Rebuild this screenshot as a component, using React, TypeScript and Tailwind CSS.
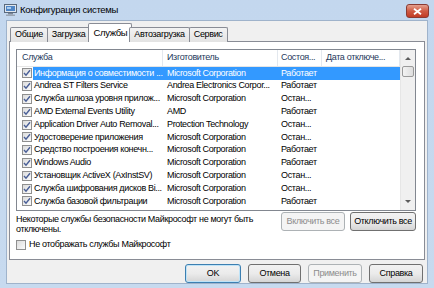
import React from 'react';

const rows = [
  { name: 'Информация о совместимости ...', maker: 'Microsoft Corporation', state: 'Работает' },
  { name: 'Andrea ST Filters Service', maker: 'Andrea Electronics Corpor...', state: 'Работает' },
  { name: 'Служба шлюза уровня прилож...', maker: 'Microsoft Corporation', state: 'Остан...' },
  { name: 'AMD External Events Utility', maker: 'AMD', state: 'Работает' },
  { name: 'Application Driver Auto Removal...', maker: 'Protection Technology', state: 'Остан...' },
  { name: 'Удостоверение приложения', maker: 'Microsoft Corporation', state: 'Остан...' },
  { name: 'Средство построения конечн...', maker: 'Microsoft Corporation', state: 'Работает' },
  { name: 'Windows Audio', maker: 'Microsoft Corporation', state: 'Работает' },
  { name: 'Установщик ActiveX (AxInstSV)', maker: 'Microsoft Corporation', state: 'Остан...' },
  { name: 'Служба шифрования дисков Bi...', maker: 'Microsoft Corporation', state: 'Остан...' },
  { name: 'Служба базовой фильтрации', maker: 'Microsoft Corporation', state: 'Работает' },
];

const tabs = ['Общие', 'Загрузка', 'Службы', 'Автозагрузка', 'Сервис'];

const CheckBox = ({ checked }: { checked: boolean }) => (
  <div className="w-[10px] h-[10px] border border-[#8f8f8f] bg-gradient-to-br from-[#dcdcdc] to-[#fbfbfb] flex items-center justify-center shrink-0">
    {checked && (
      <svg width="8" height="8" viewBox="0 0 8 8">
        <path d="M1 4 L3 6.2 L7 1.2" fill="none" stroke="#4a5f97" strokeWidth="1.4" />
      </svg>
    )}
  </div>
);

const WinButton = ({ label, disabled, primary, w }: { label: string; disabled?: boolean; primary?: boolean; w: string }) => (
  <div
    className={`${w} h-[19px] rounded-[3px] border flex items-center justify-center ${
      disabled
        ? 'border-[#adb2b5] bg-[#f4f4f4] text-[#8d8d8d]'
        : primary
        ? 'border-[#3c7fb1] bg-gradient-to-b from-[#f2f2f2] via-[#ebebeb] to-[#d5d5d5] text-black shadow-[inset_0_0_0_1px_#bfe3f7]'
        : 'border-[#707070] bg-gradient-to-b from-[#f2f2f2] via-[#ebebeb] to-[#d5d5d5] text-black'
    }`}
  >
    {label}
  </div>
);

export default function App() {
  return (
    <div
      className="w-[434px] h-[288px] bg-gradient-to-b from-[#c3d7ee] to-[#c7daef] flex flex-col overflow-hidden"
      style={{ fontFamily: '"Liberation Sans", Arial, sans-serif' }}
    >
      {/* title bar */}
      <div className="h-[20px] flex items-center pl-[4px] pr-[5px] shrink-0">
        <svg width="13" height="12" viewBox="0 0 13 12" className="mr-[3px]">
          <rect x="0.5" y="0.5" width="12" height="8" fill="#dfe6ee" stroke="#5a6a7e" />
          <rect x="2" y="2" width="9" height="5" fill="#4f86c6" />
          <rect x="3" y="3" width="4" height="2" fill="#a9cdf2" />
          <rect x="4" y="9" width="5" height="1.5" fill="#7c8796" />
          <rect x="2" y="10.5" width="9" height="1.5" fill="#9aa5b3" />
        </svg>
        <span className="text-[9.5px] tracking-[-0.3px] text-black">Конфигурация системы</span>
        <div className="ml-auto mt-[2px] w-[23px] h-[14px] rounded-[3px] border border-[#8a3b33] bg-gradient-to-b from-[#e3a08f] via-[#cf5a43] to-[#c13b24] flex items-center justify-center">
          <svg width="9" height="7" viewBox="0 0 9 7">
            <path d="M1 0.8 L8 6.2 M8 0.8 L1 6.2" stroke="white" strokeWidth="1.8" />
          </svg>
        </div>
      </div>

      {/* client area */}
      <div className="flex-1 mx-[6px] mb-[4px] bg-[#f0f0f0] border border-[#9fb3cb] flex flex-col text-[9px] tracking-[-0.35px] text-black">
        {/* tabs */}
        <div className="flex items-end pl-[3px] h-[19px] mt-[2px] relative z-10">
          {tabs.map((t, i) =>
            t === 'Службы' ? (
              <div key={t} className="h-[19px] px-[4px] -mx-[2px] bg-white border border-b-0 border-[#898c95] rounded-t-[2px] flex items-center text-[9.5px]">
                {t}
              </div>
            ) : (
              <div
                key={t}
                className={`h-[15px] px-[4px] bg-gradient-to-b from-[#f3f3f3] to-[#e3e3e3] border border-b-0 border-[#898c95] rounded-t-[2px] flex items-center ${i > 0 ? '-ml-px' : ''}`}
              >
                {t}
              </div>
            )
          )}
        </div>

        {/* panel */}
        <div className="ml-[2px] w-[416px] h-[219px] -mt-px bg-white border border-[#898c95] flex flex-col pl-[6px] pt-[7px]">
          {/* list view */}
          <div className="w-[400px] h-[162px] border border-[#828790] flex">
            <div className="flex-1 flex flex-col overflow-hidden">
              <div className="h-[17px] flex items-center text-[#1e395b] border-b border-[#e5e5e5] shrink-0">
                <div className="w-[146px] pl-[5px] h-full flex items-center border-r border-[#e3e8ee]">Служба</div>
                <div className="w-[115px] pl-[4px] h-full flex items-center border-r border-[#e3e8ee]">Изготовитель</div>
                <div className="w-[44px] pl-[3px] h-full flex items-center border-r border-[#e3e8ee]">Состоя...</div>
                <div className="w-[78px] pl-[4px] h-full flex items-center border-r border-[#e3e8ee]">Дата отключе...</div>
              </div>
              {rows.map((r, i) => (
                <div key={i} className="h-[12.8px] flex items-center shrink-0 whitespace-nowrap">
                  <div className="w-[16px] pl-[5px] flex items-center">
                    <CheckBox checked />
                  </div>
                  <div className={`flex-1 h-full flex items-center ${i === 0 ? 'bg-[#3399ff] text-white' : ''}`}>
                    <div className="w-[130px] pl-[1px] overflow-hidden">{r.name}</div>
                    <div className="w-[115px] pl-[4px] overflow-hidden">{r.maker}</div>
                    <div className="w-[44px] pl-[3px] overflow-hidden">{r.state}</div>
                  </div>
                </div>
              ))}
            </div>
            {/* scrollbar */}
            <div className="w-[15px] bg-[#f0f0f0] border-l border-[#e6e6e6] flex flex-col">
              <div className="h-[16px] flex items-center justify-center">
                <svg width="6" height="4" viewBox="0 0 6 4"><path d="M0 4 L3 1 L6 4 Z" fill="#5c5c5c" /></svg>
              </div>
              <div className="mx-[1px] h-[11px] rounded-[2px] border border-[#9a9a9a] bg-gradient-to-r from-[#f3f3f3] to-[#dedede]" />
              <div className="flex-1" />
              <div className="h-[16px] flex items-center justify-center">
                <svg width="6" height="4" viewBox="0 0 6 4"><path d="M0 0 L3 3 L6 0 Z" fill="#5c5c5c" /></svg>
              </div>
            </div>
          </div>

          {/* info + buttons */}
          <div className="flex mt-[1px] w-[400px]">
            <div className="flex-1 leading-[10px] pt-[2px]">
              Некоторые службы безопасности Майкрософт не могут быть
              <br />
              отключены.
            </div>
            <div className="flex gap-[5px]">
              <WinButton label="Включить все" disabled w="w-[64px]" />
              <WinButton label="Отключить все" w="w-[66px]" />
            </div>
          </div>

          <div className="flex items-center gap-[3px] mt-[4px]">
            <CheckBox checked={false} />
            <span>Не отображать службы Майкрософт</span>
          </div>
        </div>

        {/* dialog buttons */}
        <div className="flex justify-end gap-[7px] pr-[4px] mt-[4px]">
          <WinButton label="OK" primary w="w-[56px]" />
          <WinButton label="Отмена" w="w-[53px]" />
          <WinButton label="Применить" disabled w="w-[54px]" />
          <WinButton label="Справка" w="w-[54px]" />
        </div>
      </div>
    </div>
  );
}
